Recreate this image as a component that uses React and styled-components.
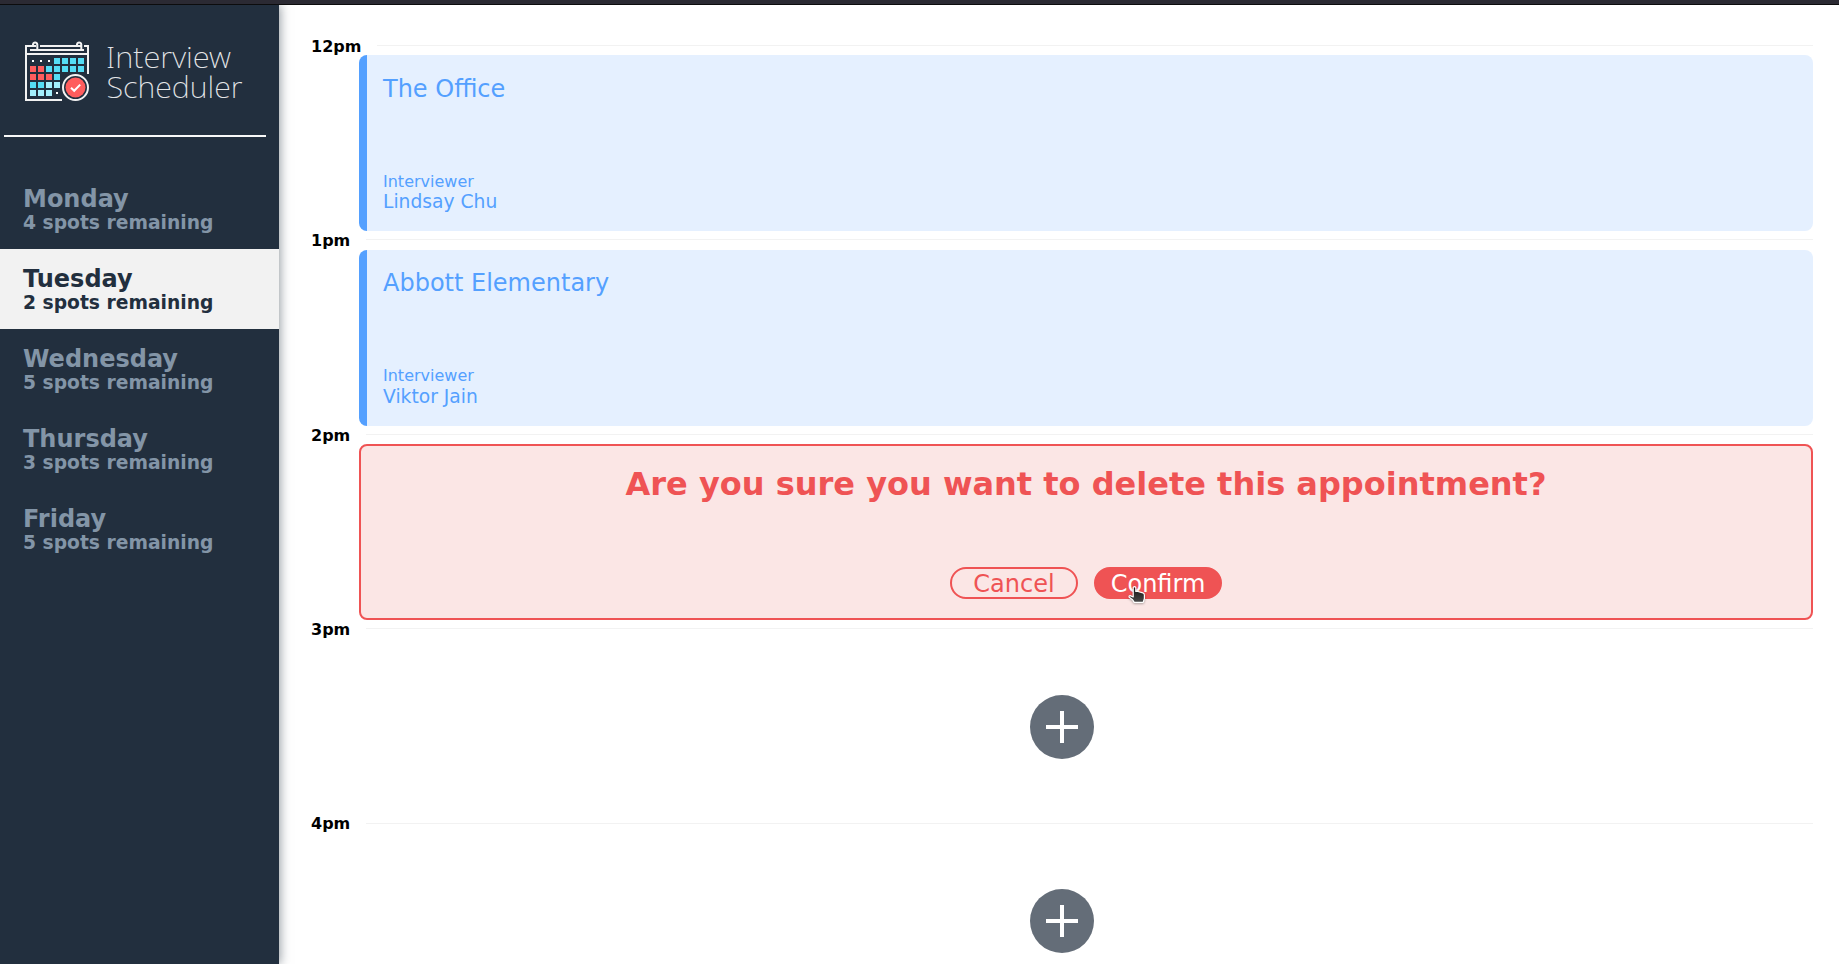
import React from "react";
import styled, { createGlobalStyle } from "styled-components";

const GlobalStyle = createGlobalStyle`
  * { box-sizing: border-box; }
  body {
    margin: 0;
    background: #fff;
    font-family: "DejaVu Sans", sans-serif;
    overflow: hidden;
  }
  h1, h2, h3, h4, p, ul { margin: 0; padding: 0; }
`;

const Page = styled.div`
  display: flex;
  flex-direction: column;
  height: 100vh;
  overflow: hidden;
`;

const TopEdge = styled.div`
  flex: 0 0 5px;
  background: #2b2a33;
  border-bottom: 1px solid #0c0c0d;
`;

const Layout = styled.main`
  display: flex;
  flex: 1;
  min-height: 0;
`;

const Sidebar = styled.section`
  flex: 0 0 279px;
  background: #222f3e;
  box-shadow: 1px 0 10px rgba(34, 47, 62, 0.5);
  clip-path: inset(0 -20px 0 0);
`;

const Logo = styled.svg`
  display: block;
  width: 279px;
  height: 130px;
`;

const Divider = styled.hr`
  margin: 0 13px 32px 4px;
  border: 0;
  height: 2px;
  background: #f8f8f8;
`;

const DayList = styled.ul`
  list-style: none;
`;

const DayItem = styled.li`
  height: 80px;
  padding: 17px 23px 0;
  color: ${(p) => (p.$selected ? "#222f3e" : "#8395a7")};
  background: ${(p) => (p.$selected ? "#f2f2f2" : "transparent")};
`;

const DayName = styled.h2`
  font-size: 24px;
  line-height: 27px;
`;

const DaySpots = styled.h3`
  font-size: 18.72px;
  line-height: 20px;
`;

const Schedule = styled.section`
  flex: 1;
  min-width: 0;
  padding: 31.9px 26px 0 32px;
`;

const TimeHeader = styled.header`
  display: flex;
  align-items: center;
  height: 18.4px;
`;

const TimeLabel = styled.h4`
  font-size: 16px;
  line-height: 18.4px;
  margin: 1.8px 16px 0 0;
`;

const TimeRule = styled.hr`
  flex: 1;
  margin: 0 0 1.3px;
  border: 0;
  border-top: 1px solid #f2f2f2;
`;

const Card = styled.article`
  height: 176px;
  margin-left: 48px;
  border-radius: 8px;
`;

const ShowCard = styled(Card)`
  display: flex;
  flex-direction: column;
  justify-content: space-between;
  padding: 19.5px 16px 18.6px;
  border-left: 8px solid #54a0ff;
  background: #e5f0ff;
  color: #54a0ff;
`;

const Student = styled.h2`
  font-size: 24px;
  font-weight: 400;
  line-height: 28px;
`;

const RoleLabel = styled.h4`
  font-size: 16px;
  font-weight: 400;
  line-height: 18.4px;
`;

const InterviewerName = styled.h3`
  font-size: 18.72px;
  font-weight: 400;
  line-height: 21.2px;
`;

const ConfirmCard = styled(Card)`
  display: flex;
  flex-direction: column;
  align-items: center;
  justify-content: space-between;
  padding: 20px 16px 19px;
  border: 2px solid #ef5354;
  background: #fbe6e5;
  color: #ef5354;
`;

const ConfirmMessage = styled.h1`
  font-size: 32px;
  line-height: 37px;
`;

const Actions = styled.section`
  display: flex;
  gap: 16px;
`;

const ActionButton = styled.button`
  position: relative;
  width: 128px;
  height: 32px;
  padding: 1px 0 0;
  border: 2px solid #ef5354;
  border-radius: 16px;
  font: 24px/28px "DejaVu Sans", sans-serif;
  color: ${(p) => (p.$filled ? "#fff" : "#ef5354")};
  background: ${(p) => (p.$filled ? "#ef5354" : "transparent")};
`;

const Pointer = styled.svg`
  position: absolute;
  left: 32px;
  top: 16px;
  width: 20px;
  height: 22px;
  filter: drop-shadow(0 1px 1px rgba(0, 0, 0, 0.3));
`;

const EmptySlot = styled.article`
  display: flex;
  align-items: center;
  justify-content: center;
  height: 176px;
  padding-top: 0.6px;
`;

const AddButton = styled.svg`
  display: block;
  width: 64px;
  height: 64px;
`;

const CYAN = "#55ddf5";
const RED = "#ff5d5d";
const PALE = "#a4effc";
const CELL_ROWS = [
  [null, null, null, CYAN, CYAN, CYAN, CYAN],
  [RED, RED, CYAN, CYAN, CYAN, CYAN, CYAN],
  [RED, RED, RED, CYAN],
  [CYAN, CYAN, PALE, PALE],
  [PALE, PALE, PALE, null],
];

function SchedulerLogo() {
  return (
    <Logo viewBox="0 5 279 130" role="img" aria-label="Interview Scheduler">
      <g fill="none" stroke="#f2f2f2" strokeWidth="2">
        <path d="M62 100H26V46H36M40 46H81M84 46H88V74M26 54H88M30 50H84" />
        <path d="M33 46V44.5A2.2 2.5 0 0 1 37.3 44.5V50M77 46V44.5A2.2 2.5 0 0 1 81.3 44.5V50" />
      </g>
      {CELL_ROWS.map((row, r) =>
        row.map((fill, c) =>
          fill ? (
            <rect key={`${r}-${c}`} x={30 + c * 8} y={58 + r * 8} width="6" height="6" fill={fill} />
          ) : (
            <rect key={`${r}-${c}`} x={32 + c * 8} y={60 + r * 8} width="2" height="2" fill="#fff" />
          )
        )
      )}
      <circle cx="75.5" cy="87.5" r="12.5" fill="#222f3e" stroke="#f2f2f2" strokeWidth="2" />
      <circle cx="75.5" cy="87.5" r="10" fill={RED} />
      <path d="M71 87.8L74.2 90.8L80.2 84.6" fill="none" stroke="#fff" strokeWidth="2" />
      <text fill="#e4e6e8" fontFamily='"Noto Sans", "Open Sans", sans-serif' fontWeight="200" fontSize="29.5">
        <tspan x="106" y="68" textLength="125" lengthAdjust="spacingAndGlyphs">Interview</tspan>
        <tspan x="106.5" y="97.5" textLength="136" lengthAdjust="spacingAndGlyphs">Scheduler</tspan>
      </text>
    </Logo>
  );
}

const DAYS = [
  { name: "Monday", spots: 4 },
  { name: "Tuesday", spots: 2 },
  { name: "Wednesday", spots: 5 },
  { name: "Thursday", spots: 3 },
  { name: "Friday", spots: 5 },
];

function Time({ children }) {
  return (
    <TimeHeader>
      <TimeLabel>{children}</TimeLabel>
      <TimeRule />
    </TimeHeader>
  );
}

function Show({ student, interviewer }) {
  return (
    <ShowCard>
      <Student>{student}</Student>
      <div>
        <RoleLabel>Interviewer</RoleLabel>
        <InterviewerName>{interviewer}</InterviewerName>
      </div>
    </ShowCard>
  );
}

function Empty() {
  return (
    <EmptySlot>
      <AddButton viewBox="0 0 64 64" role="img" aria-label="Add">
        <circle cx="32" cy="32" r="32" fill="#646d78" />
        <path d="M32 16V48M16 32H48" stroke="#fff" strokeWidth="4" />
      </AddButton>
    </EmptySlot>
  );
}

function HandPointer() {
  return (
    <Pointer viewBox="0 0 20 22" aria-hidden="true">
      <defs>
        <linearGradient id="hand" x1="0" y1="0" x2="0" y2="1">
          <stop offset="0" stopColor="#111" />
          <stop offset="1" stopColor="#4a4a4a" />
        </linearGradient>
      </defs>
      <path
        d="M5.2 2.4Q6.5 .8 7.8 2.4V6.4L10 6.5L12.4 7.2L14.8 7.8Q16.4 8.4 16.4 10V13.5L15.2 17.4H6.2L4.6 14.7L1.2 12.2Q.6 10.6 2.2 10.6L5.2 12Z"
        fill="url(#hand)"
        stroke="#fff"
        strokeWidth="1.2"
        strokeLinejoin="round"
      />
    </Pointer>
  );
}

export default function App() {
  return (
    <Page>
      <GlobalStyle />
      <TopEdge />
      <Layout>
        <Sidebar>
          <SchedulerLogo />
          <Divider />
          <DayList>
            {DAYS.map((day) => (
              <DayItem key={day.name} $selected={day.name === "Tuesday"}>
                <DayName>{day.name}</DayName>
                <DaySpots>{day.spots} spots remaining</DaySpots>
              </DayItem>
            ))}
          </DayList>
        </Sidebar>
        <Schedule>
          <Time>12pm</Time>
          <Show student="The Office" interviewer="Lindsay Chu" />
          <Time>1pm</Time>
          <Show student="Abbott Elementary" interviewer="Viktor Jain" />
          <Time>2pm</Time>
          <ConfirmCard>
            <ConfirmMessage>Are you sure you want to delete this appointment?</ConfirmMessage>
            <Actions>
              <ActionButton>Cancel</ActionButton>
              <ActionButton $filled>
                Confirm
                <HandPointer />
              </ActionButton>
            </Actions>
          </ConfirmCard>
          <Time>3pm</Time>
          <Empty />
          <Time>4pm</Time>
          <Empty />
        </Schedule>
      </Layout>
    </Page>
  );
}
